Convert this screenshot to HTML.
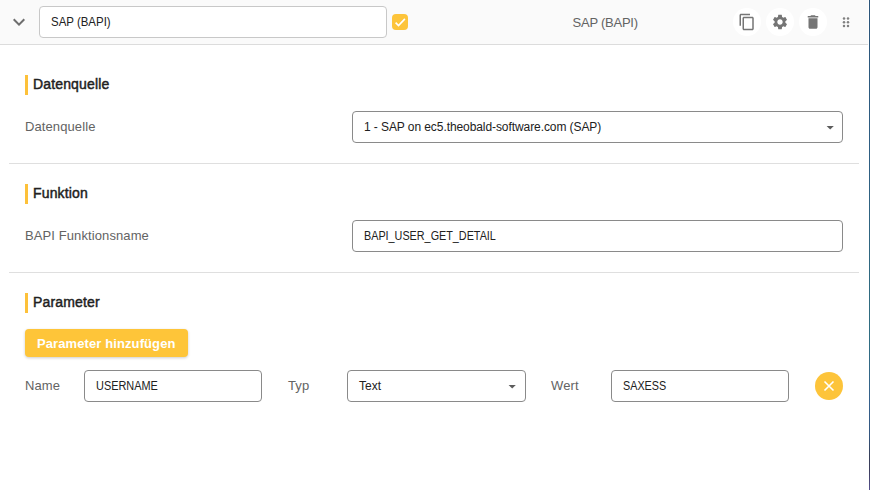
<!DOCTYPE html>
<html><head><meta charset="utf-8">
<style>
*{box-sizing:border-box;margin:0;padding:0}
html,body{width:870px;height:490px;overflow:hidden;background:#fff;font-family:"Liberation Sans",sans-serif;position:relative}
.a{position:absolute}
.t{position:absolute;white-space:nowrap;line-height:1}
.hdr{left:0;top:0;width:868px;height:45px;background:#fafafa;border-bottom:1px solid #dcdcdc}
.edge{left:869px;top:0;width:1px;height:490px;background:linear-gradient(#2b5479 0%,#2e5d82 30%,#2f6b80 62%,#2f6d82 70%,#35608c 82%,#33557e 89%,#363f58 93%,#3c3d5c 96%,#55508e 100%)}
.box{position:absolute;border:1px solid #8a8a8a;border-radius:4px;background:#fff}
.lbl{font-size:13px;color:#636363;letter-spacing:0.1px}
.val{font-size:12px;color:#212121}
.bar{position:absolute;left:25px;width:3px;height:20px;background:#fdc13a}
.h{font-size:14px;font-weight:400;color:#212121;-webkit-text-stroke:0.45px #212121;letter-spacing:0.15px}
.div{position:absolute;left:9px;width:850px;height:1px;background:#dfdfdf}
.circ{position:absolute;width:28px;height:28px;border-radius:50%;background:#fff}
.arrow{position:absolute;width:0;height:0;border-left:3.5px solid transparent;border-right:3.5px solid transparent;border-top:4px solid #555}
</style></head><body>
<div class="a hdr"></div>
<div class="a edge"></div>

<!-- chevron -->
<svg class="a" style="left:7px;top:10px" width="24" height="24" viewBox="0 0 24 24"><path d="M16.59 8.59L12 13.17 7.41 8.59 6 10l6 6 6-6z" fill="#6e6e6e"/></svg>

<div class="box" style="left:39px;top:6px;width:348px;height:32px;border-color:#c8c8c8;border-radius:4px"></div>
<div class="t val" style="left:51px;top:16px;transform:scaleX(0.955);transform-origin:0 0">SAP (BAPI)</div>

<!-- checkbox -->
<div class="a" style="left:392px;top:14px;width:16px;height:16px;border-radius:4px;background:#fdc43a"></div>
<svg class="a" style="left:392px;top:14px" width="16" height="16" viewBox="0 0 16 16"><path d="M3.6 8.6l2.9 2.9 6.4-6.6" fill="none" stroke="#fff" stroke-width="1.6"/></svg>

<div class="t" style="left:572.6px;top:16px;font-size:13px;color:#636363;letter-spacing:-0.25px">SAP (BAPI)</div>

<div class="circ" style="left:733px;top:8px"></div>
<div class="circ" style="left:766px;top:8px"></div>
<div class="circ" style="left:799px;top:8px"></div>
<svg class="a" style="left:738px;top:13px" width="18" height="18" viewBox="0 0 24 24"><path fill="#757575" d="M16 1H4c-1.1 0-2 .9-2 2v14h2V3h12V1zm3 4H8c-1.1 0-2 .9-2 2v14c0 1.1.9 2 2 2h11c1.1 0 2-.9 2-2V7c0-1.1-.9-2-2-2zm0 16H8V7h11v14z"/></svg>
<svg class="a" style="left:771px;top:13px" width="18" height="18" viewBox="0 0 24 24"><path fill="#757575" d="M19.14 12.94c.04-.3.06-.61.06-.94 0-.32-.02-.64-.07-.94l2.03-1.58c.18-.14.23-.41.12-.61l-1.92-3.32c-.12-.22-.37-.29-.59-.22l-2.39.96c-.5-.38-1.03-.7-1.62-.94l-.36-2.54c-.04-.24-.24-.41-.48-.41h-3.84c-.24 0-.43.17-.47.41l-.36 2.54c-.59.24-1.13.57-1.62.94l-2.39-.96c-.22-.08-.47 0-.59.22L2.74 8.87c-.12.21-.08.47.12.61l2.03 1.58c-.05.3-.09.63-.09.94s.02.64.07.94l-2.03 1.58c-.18.14-.23.41-.12.61l1.92 3.32c.12.22.37.29.59.22l2.39-.96c.5.38 1.03.7 1.62.94l.36 2.54c.05.24.24.41.48.41h3.84c.24 0 .44-.17.47-.41l.36-2.54c.59-.24 1.13-.56 1.62-.94l2.39.96c.22.08.47 0 .59-.22l1.92-3.32c.12-.22.07-.47-.12-.61l-2.01-1.58zM12 15.6c-1.98 0-3.6-1.62-3.6-3.6s1.62-3.6 3.6-3.6 3.6 1.62 3.6 3.6-1.62 3.6-3.6 3.6z"/></svg>
<svg class="a" style="left:804px;top:13px" width="18" height="18" viewBox="0 0 24 24"><path fill="#757575" d="M6 19c0 1.1.9 2 2 2h8c1.1 0 2-.9 2-2V7H6v12zM19 4h-3.5l-1-1h-5l-1 1H5v2h14V4z"/></svg>
<svg class="a" style="left:838px;top:14px" width="16" height="16" viewBox="0 0 16 16"><g fill="#808080"><circle cx="6" cy="4.4" r="1.25"/><circle cx="10" cy="4.4" r="1.25"/><circle cx="6" cy="8.2" r="1.25"/><circle cx="10" cy="8.2" r="1.25"/><circle cx="6" cy="12.1" r="1.25"/><circle cx="10" cy="12.1" r="1.25"/></g></svg>

<!-- Section 1 -->
<div class="bar" style="top:75px"></div>
<div class="t h" style="left:33px;top:77px">Datenquelle</div>
<div class="t lbl" style="left:25px;top:120px">Datenquelle</div>
<div class="box" style="left:352px;top:111px;width:491px;height:32px"></div>
<div class="t val" style="left:364px;top:121px;letter-spacing:-0.08px">1 - SAP on ec5.theobald-software.com (SAP)</div>
<svg class="a" style="left:824px;top:124px" width="12" height="8" viewBox="0 0 12 8"><path d="M2.6 2h7.2L6.2 5.6z" fill="#5c5c5c"/></svg>
<div class="div" style="top:163px"></div>

<!-- Section 2 -->
<div class="bar" style="top:184px"></div>
<div class="t h" style="left:33px;top:186px">Funktion</div>
<div class="t lbl" style="left:25px;top:229px">BAPI Funktionsname</div>
<div class="box" style="left:352px;top:220px;width:491px;height:32px"></div>
<div class="t val" style="left:364px;top:230px;transform:scaleX(0.9);transform-origin:0 0">BAPI_USER_GET_DETAIL</div>
<div class="div" style="top:272px"></div>

<!-- Section 3 -->
<div class="bar" style="top:293px"></div>
<div class="t h" style="left:33px;top:295px">Parameter</div>
<div class="a" style="left:25px;top:329px;width:163px;height:28px;border-radius:4px;background:#fec539;box-shadow:0 1px 3px rgba(0,0,0,.2)"></div>
<div class="t" style="left:37px;top:337px;font-size:13px;font-weight:700;color:#fff;letter-spacing:0.1px">Parameter hinzufügen</div>

<div class="t lbl" style="left:25px;top:379px">Name</div>
<div class="box" style="left:84px;top:370px;width:178px;height:32px"></div>
<div class="t val" style="left:96px;top:380px;transform:scaleX(0.91);transform-origin:0 0">USERNAME</div>
<div class="t lbl" style="left:288px;top:379px">Typ</div>
<div class="box" style="left:347px;top:370px;width:179px;height:32px"></div>
<div class="t val" style="left:359px;top:380px">Text</div>
<svg class="a" style="left:506px;top:383px" width="12" height="8" viewBox="0 0 12 8"><path d="M2.6 2h7.2L6.2 5.6z" fill="#5c5c5c"/></svg>
<div class="t lbl" style="left:551px;top:379px">Wert</div>
<div class="box" style="left:611px;top:370px;width:178px;height:32px"></div>
<div class="t val" style="left:623px;top:380px;transform:scaleX(0.9);transform-origin:0 0">SAXESS</div>
<div class="circ" style="left:815px;top:372px;background:#fdc43a"></div>
<svg class="a" style="left:815px;top:372px" width="28" height="28" viewBox="0 0 28 28"><path d="M9.5 9.5l9 9M18.5 9.5l-9 9" stroke="#fff" stroke-width="1.6" fill="none"/></svg>
</body></html>
